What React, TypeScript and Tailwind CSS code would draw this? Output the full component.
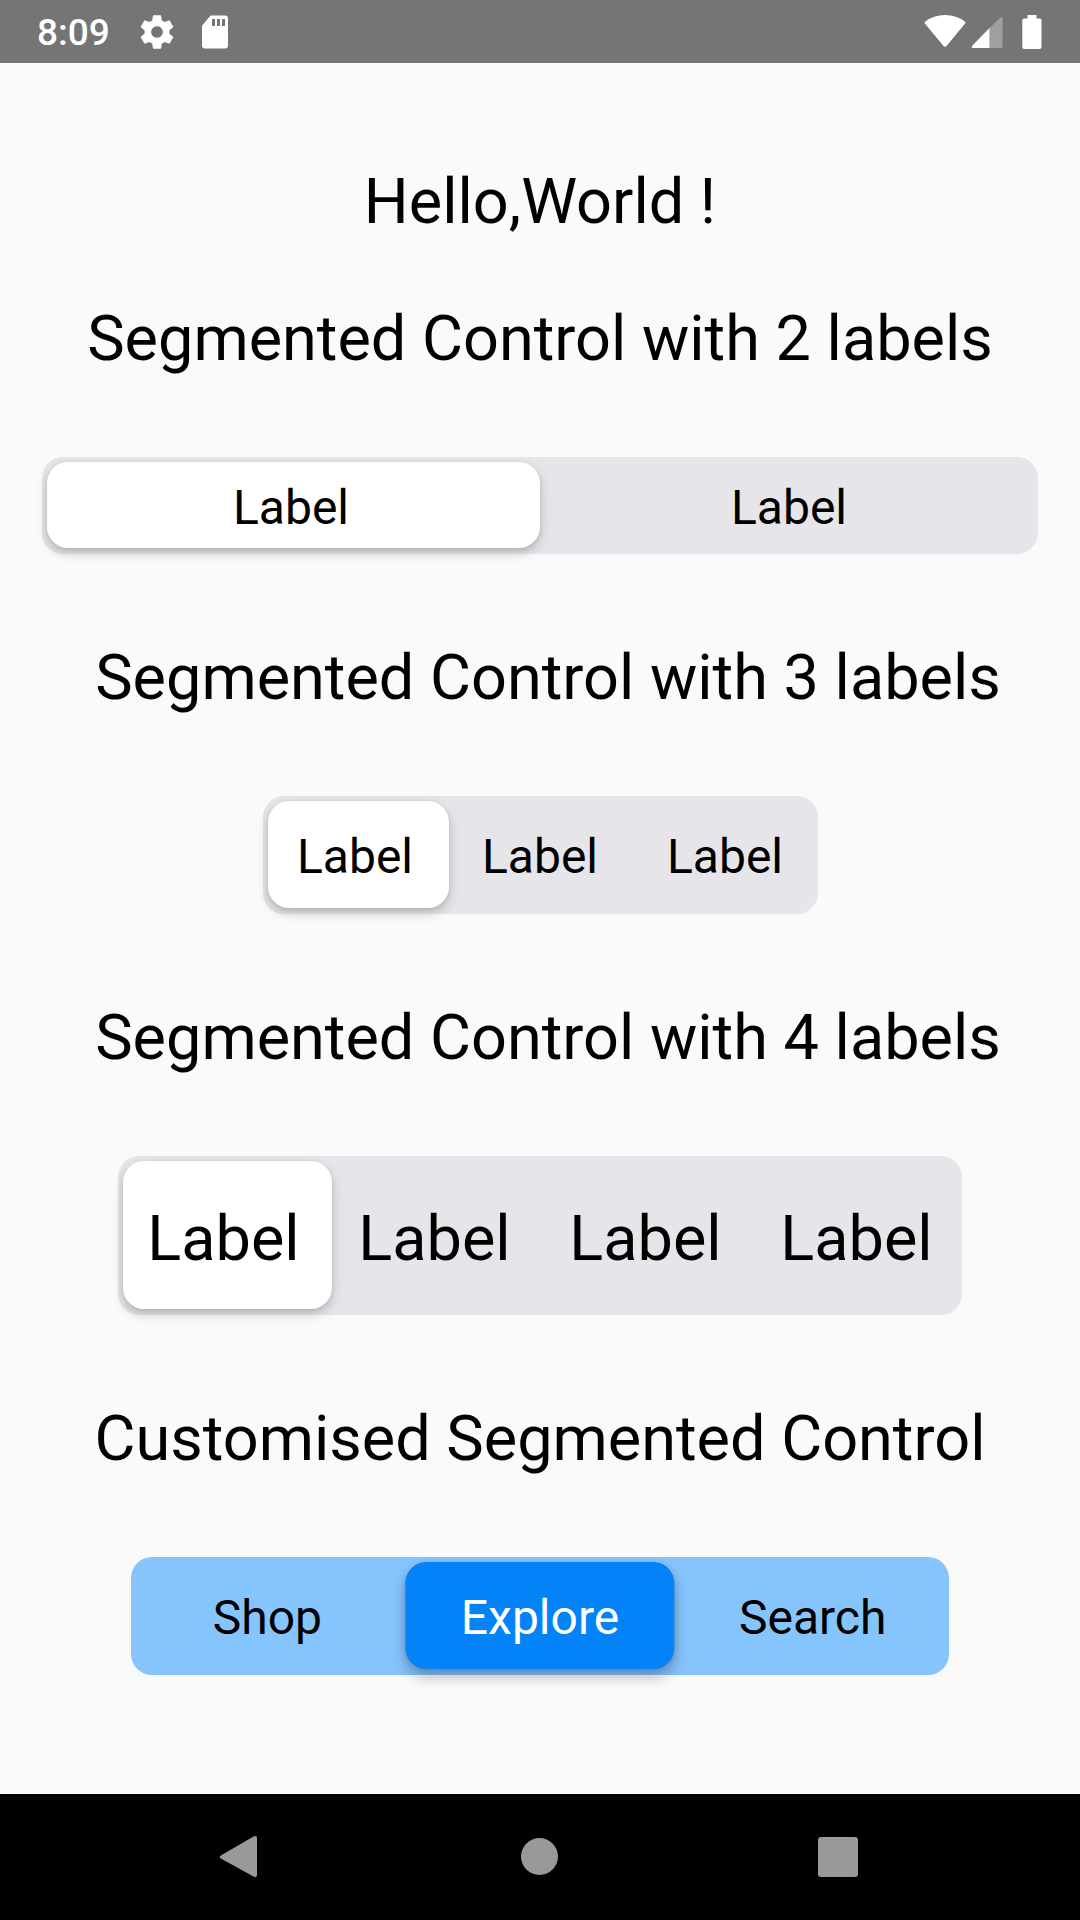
import { useState } from "react";

type SegmentedControlProps = {
  name: string;
  labels: string[];
  initial?: number;
  trackClass: string;
  labelClass: string;
  thumbClass: string;
  activeTextClass?: string;
};

function SegmentedControl({
  name,
  labels,
  initial = 0,
  trackClass,
  labelClass,
  thumbClass,
  activeTextClass = "text-black",
}: SegmentedControlProps) {
  const [active, setActive] = useState(initial);
  return (
    <div role="group" aria-label={name} className={`relative max-w-full rounded-[21px] ${trackClass}`}>
      <div className="pointer-events-none absolute inset-x-[5px] top-[5px] bottom-[6px]">
        <div
          className={`h-full rounded-[21px] transition-transform ${thumbClass}`}
          style={{ width: `${100 / labels.length}%`, transform: `translateX(${active * 100}%)` }}
        />
      </div>
      <div className="relative flex">
        {labels.map((label, i) => (
          <button
            key={i}
            type="button"
            aria-pressed={i === active}
            onClick={() => setActive(i)}
            className={`min-w-0 flex-1 text-center ${labelClass} ${i === active ? activeTextClass : "text-black"}`}
          >
            {label}
          </button>
        ))}
      </div>
    </div>
  );
}

function StatusBar() {
  return (
    <header className="flex h-[63px] items-center justify-between bg-[#757575] pr-[38px] pl-[37px] text-white">
      <div className="flex items-center">
        <span className="pt-[2px] text-[37px] leading-[44px] font-medium">8:09</span>
        <svg viewBox="0 0 24 24" className="ml-[27px] size-10" fill="currentColor" aria-label="Settings">
          <path d="M19.43 12.98c.04-.32.07-.64.07-.98s-.03-.66-.07-.98l2.11-1.65c.19-.15.24-.42.12-.64l-2-3.46c-.12-.22-.39-.3-.61-.22l-2.49 1c-.52-.4-1.08-.73-1.69-.98l-.38-2.65A.488.488 0 0 0 14 2h-4c-.25 0-.46.18-.49.42l-.38 2.65c-.61.25-1.17.59-1.69.98l-2.49-1c-.23-.09-.49 0-.61.22l-2 3.46c-.13.22-.07.49.12.64l2.11 1.65c-.04.32-.07.65-.07.98s.03.66.07.98l-2.11 1.65c-.19.15-.24.42-.12.64l2 3.46c.12.22.39.3.61.22l2.49-1c.52.4 1.08.73 1.69.98l.38 2.65c.03.24.24.42.49.42h4c.25 0 .46-.18.49-.42l.38-2.65c.61-.25 1.17-.59 1.69-.98l2.49 1c.23.09.49 0 .61-.22l2-3.46c.12-.22.07-.49-.12-.64l-2.11-1.65zM12 15.5c-1.93 0-3.5-1.57-3.5-3.5s1.57-3.5 3.5-3.5 3.500 1.570 3.500 3.500-1.570 3.500-3.500 3.500z" />
        </svg>
        <svg viewBox="0 0 40 40" className="ml-[18px] size-10" fill="currentColor" aria-label="SD card">
          <path
            fillRule="evenodd"
            d="M16 3.500h14a3 3 0 0 1 3 3v27a3 3 0 0 1-3 3H10a3 3 0 0 1-3-3V14.500q0-1 .8-1.800l7-8.200q.6-1 1.200-1zM17 7v7h3V7zM22 7v7h3V7zM27 7v7h3V7z"
          />
        </svg>
      </div>
      <div className="flex items-center">
        <svg viewBox="0 0 42 34" className="h-[34px] w-[42px]" fill="currentColor" aria-label="Wi-Fi">
          <path d="M.9 8.600Q0 7.600 1 6.700 9.500 0 21 0t20 6.700q1 .9.100 1.900L22.500 31q-1.500 1.500-3 0z" />
        </svg>
        <svg viewBox="0 0 32 34" className="ml-[5px] h-[34px] w-8" aria-label="Mobile signal">
          <path d="M31.500 3.400v28.400q0 1.200-1.200 1.200H18.500V13L29.300 2.600q2.200-1.400 2.200.8z" fill="#9f9f9f" />
          <path d="M18.500 13v20H1.600q-1.600-.5-.6-2z" fill="white" />
        </svg>
        <svg viewBox="0 0 20 34" className="ml-[19px] h-[34px] w-5" fill="currentColor" aria-label="Battery">
          <path d="M5.500 0h9v3.400H18q1.500 0 1.500 1.600v27q0 2-2 2H2.300q-2 0-2-2V5q0-1.600 1.600-1.600h3.600z" />
        </svg>
      </div>
    </header>
  );
}

function NavigationBar() {
  return (
    <nav className="flex h-[126px] justify-center bg-black text-[#999999]">
      <div className="grid w-full max-w-[900px] grid-cols-3 place-items-center">
        <button type="button" aria-label="Back">
          <svg viewBox="0 0 48 48" className="size-12" fill="currentColor">
            <path d="M4.800 22.600 37.500 3.500q3.500-1.600 3.500 1.500v37q0 3.100-3.500 1.500L4.800 25.400q-2-1.400 0-2.800z" />
          </svg>
        </button>
        <button type="button" aria-label="Home">
          <svg viewBox="0 0 48 48" className="size-12" fill="currentColor">
            <circle cx="23.500" cy="23.500" r="18.500" />
          </svg>
        </button>
        <button type="button" aria-label="Overview">
          <svg viewBox="0 0 48 48" className="size-12" fill="currentColor">
            <rect x="2" y="4" width="40" height="40" rx="3" />
          </svg>
        </button>
      </div>
    </nav>
  );
}

const SOFT_THUMB = "bg-white shadow-[0_5px_12px_rgba(0,0,0,0.2),0_1px_4px_rgba(0,0,0,0.07)]";
const HEADING = "pt-[87px] pb-[81px] text-center text-[63px] leading-[74px]";
const GREY_TRACK = "bg-[#e5e5ea]";

export default function App() {
  return (
    <div className="flex min-h-screen flex-col bg-[#fafafa] font-['Roboto',sans-serif] text-black">
      <StatusBar />
      <main className="flex flex-1 flex-col items-center pt-[102px]">
        <h1 className="text-center text-[63px] leading-[74px]">Hello,World !</h1>
        <h2 className="pt-[63px] pb-[81px] text-center text-[63px] leading-[74px]">
          Segmented Control with 2 labels
        </h2>
        <div className="w-full px-[42px]">
          <SegmentedControl
            name="Two labels"
            labels={["Label", "Label"]}
            trackClass={GREY_TRACK}
            labelClass="pt-[23px] pb-[18px] text-[48px] leading-[56px]"
            thumbClass={SOFT_THUMB}
          />
        </div>
        <h2 className={`pl-4 ${HEADING}`}>Segmented Control with 3 labels</h2>
        <SegmentedControl
          name="Three labels"
          labels={["Label", "Label", "Label"]}
          trackClass={`w-[555px] ${GREY_TRACK}`}
          labelClass="pt-[33px] pb-[29px] text-[48px] leading-[56px]"
          thumbClass={SOFT_THUMB}
        />
        <h2 className={`pl-4 ${HEADING}`}>Segmented Control with 4 labels</h2>
        <SegmentedControl
          name="Four labels"
          labels={["Label", "Label", "Label", "Label"]}
          trackClass={`w-[844px] ${GREY_TRACK}`}
          labelClass="pt-[46px] pb-[39px] text-[63px] leading-[74px]"
          thumbClass={SOFT_THUMB}
        />
        <h2 className={HEADING}>Customised Segmented Control</h2>
        <SegmentedControl
          name="Customised"
          labels={["Shop", "Explore", "Search"]}
          initial={1}
          trackClass="w-[818px] bg-[#86c4fd]"
          labelClass="pt-[33px] pb-[29px] text-[48px] leading-[56px]"
          thumbClass="bg-[#0482f7] shadow-[0_8px_14px_rgba(0,0,0,0.26),0_1px_5px_rgba(0,0,0,0.1)]"
          activeTextClass="text-white"
        />
      </main>
      <NavigationBar />
    </div>
  );
}
